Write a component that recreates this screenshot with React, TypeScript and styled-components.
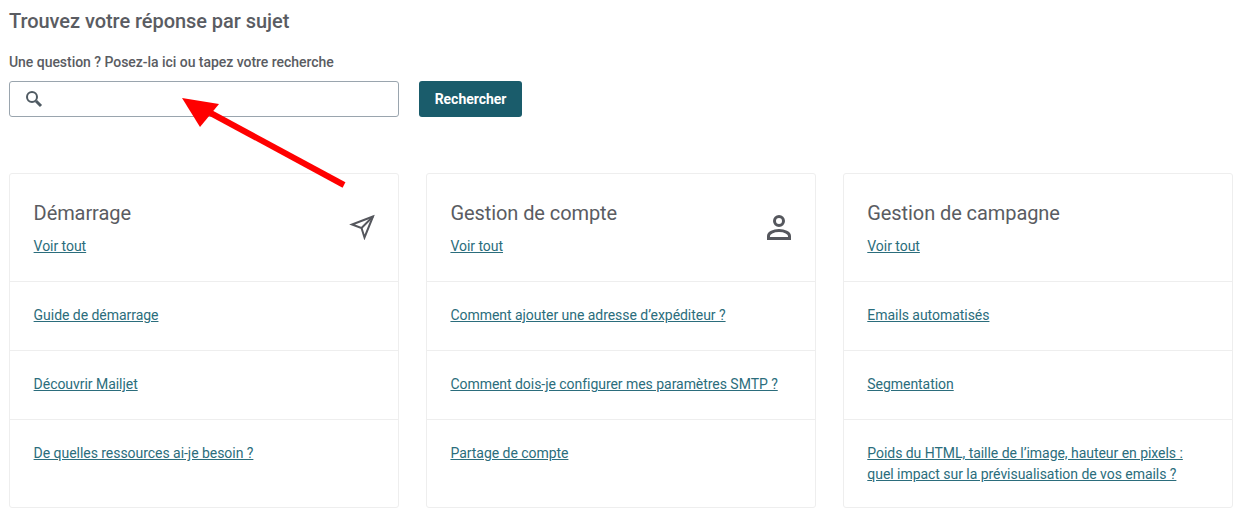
import { createGlobalStyle, styled } from 'styled-components';

const GlobalStyle = createGlobalStyle`
  html, body {
    margin: 0;
    padding: 0;
    background: #fff;
    font-family: Roboto, "Liberation Sans", sans-serif;
  }
`;

const Page = styled.div`
  position: relative;
  width: 1243px;
  height: 518px;
  padding: 10px 10px 0 9px;
  box-sizing: border-box;
  overflow: hidden;
`;

const Heading = styled.h2`
  margin: 0;
  font-size: 20px;
  line-height: 22px;
  font-weight: 500;
  letter-spacing: -0.05px;
  color: #5a5c62;
`;

const Label = styled.label`
  display: block;
  margin-top: 21px;
  font-size: 14px;
  line-height: 18px;
  font-weight: 500;
  letter-spacing: -0.04px;
  color: #5a5c62;
`;

const SearchRow = styled.div`
  display: flex;
  gap: 20px;
  margin-top: 10px;
`;

const SearchBox = styled.div`
  display: flex;
  align-items: center;
  width: 390px;
  height: 36px;
  box-sizing: border-box;
  padding-left: 15px;
  border: 1px solid #9aa5ae;
  border-radius: 3px;
  color: #4f5a62;
`;

const SearchInput = styled.input`
  flex: 1;
  min-width: 0;
  height: 100%;
  border: 0;
  outline: 0;
  padding: 0 8px;
  background: transparent;
`;

const SearchButton = styled.button`
  width: 103px;
  height: 36px;
  border: 0;
  border-radius: 3px;
  background: #1a5c6b;
  color: #fff;
  font-family: inherit;
  font-size: 14px;
  font-weight: 700;
  letter-spacing: -0.04px;
`;

const Cards = styled.div`
  display: grid;
  grid-template-columns: repeat(3, 390px);
  gap: 26.85px;
  margin-top: 56px;
`;

const Card = styled.section`
  height: 335px;
  box-sizing: border-box;
  border: 1px solid #eeeeee;
  border-radius: 3px;
  background: #fff;
`;

const CardHeader = styled.div`
  display: flex;
  justify-content: space-between;
  height: 108px;
  box-sizing: border-box;
  padding: 26px 24px 0 23.6px;
  border-bottom: 1px solid #eeeeee;
`;

const CardTitle = styled.h3`
  margin: 0 0 10px;
  font-size: 20px;
  line-height: 26px;
  font-weight: 400;
  letter-spacing: -0.08px;
  color: #5a5c62;
`;

const TextLink = styled.a`
  font-size: 14px;
  line-height: 20px;
  letter-spacing: -0.04px;
  color: #2b6d7c;
  text-decoration: underline;
`;

const IconSlot = styled.div`
  margin-top: 14px;
  margin-right: -1px;
  color: #55575d;
`;

const Row = styled.div`
  height: 69px;
  box-sizing: border-box;
  padding: 23px 24px 0 23.6px;
  border-bottom: 1px solid #eeeeee;

  &:last-child {
    height: auto;
    border-bottom: 0;
  }
`;

const RowLink = styled(TextLink)`
  display: block;
  line-height: 21px;
`;

const Arrow = styled.svg`
  position: absolute;
  left: 170px;
  top: 90px;
`;

const SearchIcon = () => (
  <svg width="18" height="18" viewBox="0 0 18 18" fill="none" stroke="currentColor">
    <circle cx="7" cy="7" r="5" strokeWidth="2" />
    <path d="M11 11l5 5" strokeWidth="3" />
  </svg>
);

const PlaneIcon = () => (
  <svg width="26" height="26" viewBox="0 0 26 26" fill="none" stroke="currentColor" strokeWidth="2" strokeLinejoin="miter">
    <path d="M24 2.500 3 10.500l9.500 3.500 3 9.500z" />
    <path d="M12.500 14 24 2.500" />
  </svg>
);

const PersonIcon = () => (
  <svg width="26" height="26" viewBox="0 0 26 26" fill="none" stroke="currentColor" strokeWidth="3">
    <circle cx="13" cy="7" r="4.500" />
    <path d="M2.500 24.500v-2.500c0-3.400 5-5.400 10.500-5.400s10.500 2 10.500 5.400v2.500z" />
  </svg>
);

const cards = [
  {
    title: 'Démarrage',
    icon: <PlaneIcon />,
    links: ['Guide de démarrage', 'Découvrir Mailjet', 'De quelles ressources ai-je besoin ?'],
  },
  {
    title: 'Gestion de compte',
    icon: <PersonIcon />,
    links: [
      'Comment ajouter une adresse d’expéditeur ?',
      'Comment dois-je configurer mes paramètres SMTP ?',
      'Partage de compte',
    ],
  },
  {
    title: 'Gestion de campagne',
    links: [
      'Emails automatisés',
      'Segmentation',
      'Poids du HTML, taille de l’image, hauteur en pixels : quel impact sur la prévisualisation de vos emails ?',
    ],
  },
];

export default function App() {
  return (
    <Page>
      <GlobalStyle />
      <Heading>Trouvez votre réponse par sujet</Heading>
      <Label>Une question ? Posez-la ici ou tapez votre recherche</Label>
      <SearchRow>
        <SearchBox>
          <SearchIcon />
          <SearchInput />
        </SearchBox>
        <SearchButton>Rechercher</SearchButton>
      </SearchRow>
      <Cards>
        {cards.map((card) => (
          <Card key={card.title}>
            <CardHeader>
              <div>
                <CardTitle>{card.title}</CardTitle>
                <TextLink href="#">Voir tout</TextLink>
              </div>
              {card.icon && <IconSlot>{card.icon}</IconSlot>}
            </CardHeader>
            {card.links.map((link) => (
              <Row key={link}>
                <RowLink href="#">{link}</RowLink>
              </Row>
            ))}
          </Card>
        ))}
      </Cards>
      <Arrow width="180" height="100" viewBox="170 90 180 100">
        <path d="M344 185 205 110" stroke="#ff0000" strokeWidth="6" fill="none" />
        <path d="M182 98 219 104 200 127z" fill="#ff0000" />
      </Arrow>
    </Page>
  );
}
